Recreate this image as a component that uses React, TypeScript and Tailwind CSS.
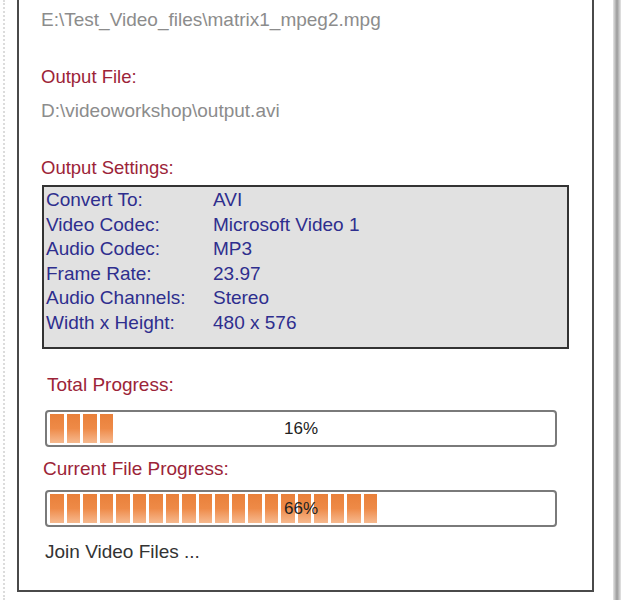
import React from "react";

const font = { fontFamily: '"Liberation Sans", Arial, sans-serif' };

function Bar({ blocks, label }: { blocks: number; label: string }) {
  return (
    <div className="relative h-[37px] w-[512px] rounded-[4px] border-2 border-[#7a7a7a] bg-white p-[2px]">
      <div className="flex h-full gap-[3px] pl-[1px]">
        {Array.from({ length: blocks }).map((_, i) => (
          <div
            key={i}
            className="h-full w-[13.5px] bg-linear-to-b from-[#e9803a] via-[#ee8a47] to-[#f6b98e]"
          />
        ))}
      </div>
      <div className="absolute inset-0 flex items-center justify-center text-[17px] text-[#222]">
        {label}
      </div>
    </div>
  );
}

const rows: [string, string][] = [
  ["Convert To:", "AVI"],
  ["Video Codec:", "Microsoft Video 1"],
  ["Audio Codec:", "MP3"],
  ["Frame Rate:", "23.97"],
  ["Audio Channels:", "Stereo"],
  ["Width x Height:", "480 x 576"],
];

export default function App() {
  return (
    <div className="flex h-[600px] w-[636px] overflow-hidden bg-white" style={font}>
      <div className="ml-[3px] h-full w-0 border-l-2 border-dotted border-[#dcdcdc]" />
      <div className="ml-[12px] h-[592px] w-[577px] shrink-0 border-x-2 border-b-2 border-[#4a4a4a] pl-[22px]">
        <div className="mt-[8px] text-[19px] leading-[24px] text-[#8c8c8c]">
          E:\Test_Video_files\matrix1_mpeg2.mpg
        </div>
        <div className="mt-[33px] text-[18.5px] leading-[24px] text-[#9c2438]">Output File:</div>
        <div className="mt-[10px] text-[19px] leading-[24px] text-[#8c8c8c]">
          D:\videoworkshop\output.avi
        </div>
        <div className="mt-[33px] text-[18.5px] leading-[24px] text-[#9c2438]">Output Settings:</div>
        <div className="ml-[1px] mt-[5px] h-[164px] w-[527px] border-2 border-[#333] bg-[#e1e1e1] pl-[2px] pt-[1px]">
          {rows.map(([k, v]) => (
            <div key={k} className="flex text-[19px] leading-[24.6px] text-[#2e2e8e]">
              <div className="w-[167px]">{k}</div>
              <div>{v}</div>
            </div>
          ))}
        </div>
        <div className="ml-[6px] mt-[24px] text-[19px] leading-[24px] text-[#9c2438]">Total Progress:</div>
        <div className="ml-[4px] mt-[13px]">
          <Bar blocks={4} label="16%" />
        </div>
        <div className="ml-[2px] mt-[10px] text-[19px] leading-[24px] text-[#9c2438]">
          Current File Progress:
        </div>
        <div className="ml-[4px] mt-[9px]">
          <Bar blocks={20} label="66%" />
        </div>
        <div className="ml-[4px] mt-[13px] text-[19px] leading-[24px] text-[#333]">Join Video Files ...</div>
      </div>
      <div className="ml-[19px] h-full w-[8px] shrink-0 bg-linear-to-r from-[#e6e6e6] via-[#9a9a9a] to-[#e6e6e6]" />
    </div>
  );
}
